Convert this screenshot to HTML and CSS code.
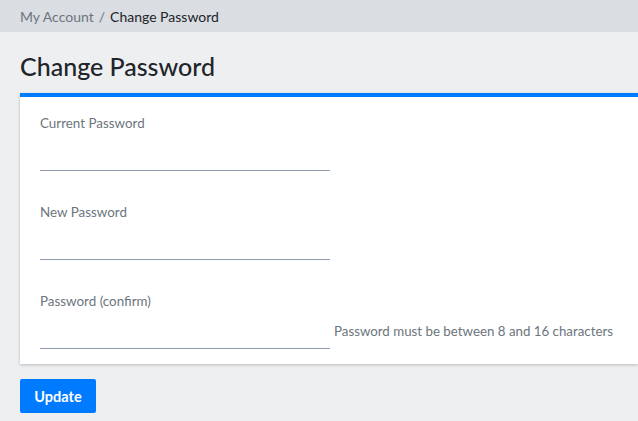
FILE: index.html
```html
<!DOCTYPE html>
<html lang="en">
<head>
<meta charset="utf-8">
<title>Change Password</title>
<link rel="stylesheet" href="styles.css">
</head>
<body>
<nav class="breadcrumb">
  <a class="crumb-link" href="#">My Account</a>
  <span class="crumb-sep">/</span>
  <span class="crumb-current">Change Password</span>
</nav>
<main class="page">
  <h1 class="title">Change Password</h1>
  <form class="card">
    <div class="group">
      <label class="label" for="cur">Current Password</label>
      <div class="row"><input class="input" id="cur" type="password"></div>
    </div>
    <div class="group">
      <label class="label" for="new">New Password</label>
      <div class="row"><input class="input" id="new" type="password"></div>
    </div>
    <div class="group last">
      <label class="label" for="conf">Password (confirm)</label>
      <div class="row"><input class="input" id="conf" type="password"><span class="help">Password must be between 8 and 16 characters</span></div>
    </div>
  </form>
  <button class="btn" type="button">Update</button>
</main>
</body>
</html>
```
FILE: styles.css
```css
* { box-sizing: border-box; }
html, body { margin: 0; padding: 0; }
body {
  background: #eeeff1;
  font-family: Lato, "Noto Sans", sans-serif;
  color: #212529;
  width: 638px;
  overflow: hidden;
}
.breadcrumb {
  height: 32px;
  background: #dadde1;
  display: flex;
  align-items: center;
  gap: 5px;
  padding-left: 20px;
  font-size: 14px;
}
.crumb-link { color: #6c757d; text-decoration: none; }
.crumb-sep { color: #6c757d; }
.crumb-current { color: #212529; }
.page { padding: 0 0 0 20px; }
.title {
  margin: 0;
  padding: 19px 0 0;
  height: 61px;
  font-size: 25px;
  font-weight: 500;
  line-height: 30px;
  color: #212529;
}
.card {
  background: #fff;
  border-top: 4px solid #007bff;
  padding: 16px 20px 15px;
  box-shadow: 0 1px 3px rgba(0,0,0,0.22);
}
.group { margin-bottom: 31px; }
.group.last { margin-bottom: 0; }
.label {
  display: block;
  font-size: 13.4px;
  line-height: 20px;
  color: #6c757d;
}
.row { display: flex; align-items: center; gap: 4px; }
.input {
  width: 290px;
  height: 38px;
  border: 0;
  border-bottom: 1px solid #8f9cae;
  background: transparent;
  outline: none;
  margin: 0;
  padding: 0;
}
.help { font-size: 13.3px; line-height: 20px; color: #6c757d; padding-top: 2px; }
.btn {
  margin-top: 15px;
  height: 34px;
  width: 76px;
  padding: 0;
  background: #007bff;
  color: #fff;
  border: 0;
  border-radius: 2px;
  font-family: Lato, "Noto Sans", sans-serif;
  font-size: 14.5px;
  font-weight: 700;
}
```
